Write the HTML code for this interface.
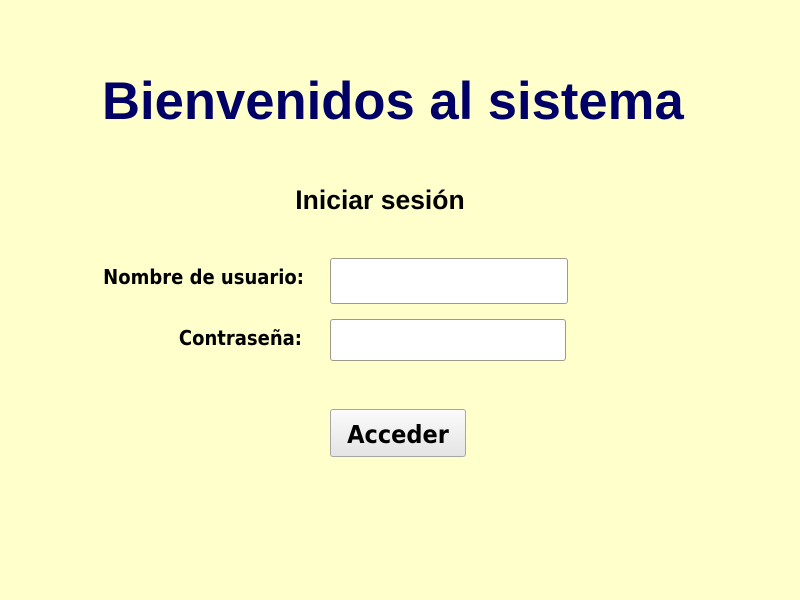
<!DOCTYPE html>
<html><head><meta charset="utf-8"><style>
body{margin:0;width:800px;height:600px;background:#ffffcc;position:relative;overflow:hidden;font-family:"Liberation Sans",sans-serif}
.a{position:absolute;white-space:nowrap}
h1{position:absolute;left:102px;top:71px;margin:0;font-size:52.6px;font-weight:bold;color:#000066;line-height:62px}
.lab{font-family:"DejaVu Sans Condensed","DejaVu Sans",sans-serif;font-weight:bold;font-size:20px;color:#000;text-align:right;right:496px}
.in{position:absolute;background:#fff;border:1px solid #a09a8a;border-radius:3px;box-sizing:border-box}
.btn{position:absolute;left:330px;top:409px;width:136px;height:48px;box-sizing:border-box;border:1px solid #a6a6a6;border-radius:3px;background:linear-gradient(#fbfbfb,#e4e4e4);font-family:"DejaVu Sans Condensed",sans-serif;font-weight:bold;font-size:25px;text-align:center;line-height:50px;color:#000}
</style></head><body>
<h1>Bienvenidos al sistema</h1>
<div class="a" style="left:0;width:760px;text-align:center;top:185px;font-size:26.5px;font-weight:bold;color:#000">Iniciar sesión</div>
<div class="a lab" style="top:265px">Nombre de usuario:</div>
<div class="a lab" style="top:326px;right:498px">Contraseña:</div>
<div class="in" style="left:330px;top:258px;width:238px;height:46px"></div>
<div class="in" style="left:330px;top:319px;width:236px;height:42px"></div>
<div class="btn">Acceder</div>
</body></html>
